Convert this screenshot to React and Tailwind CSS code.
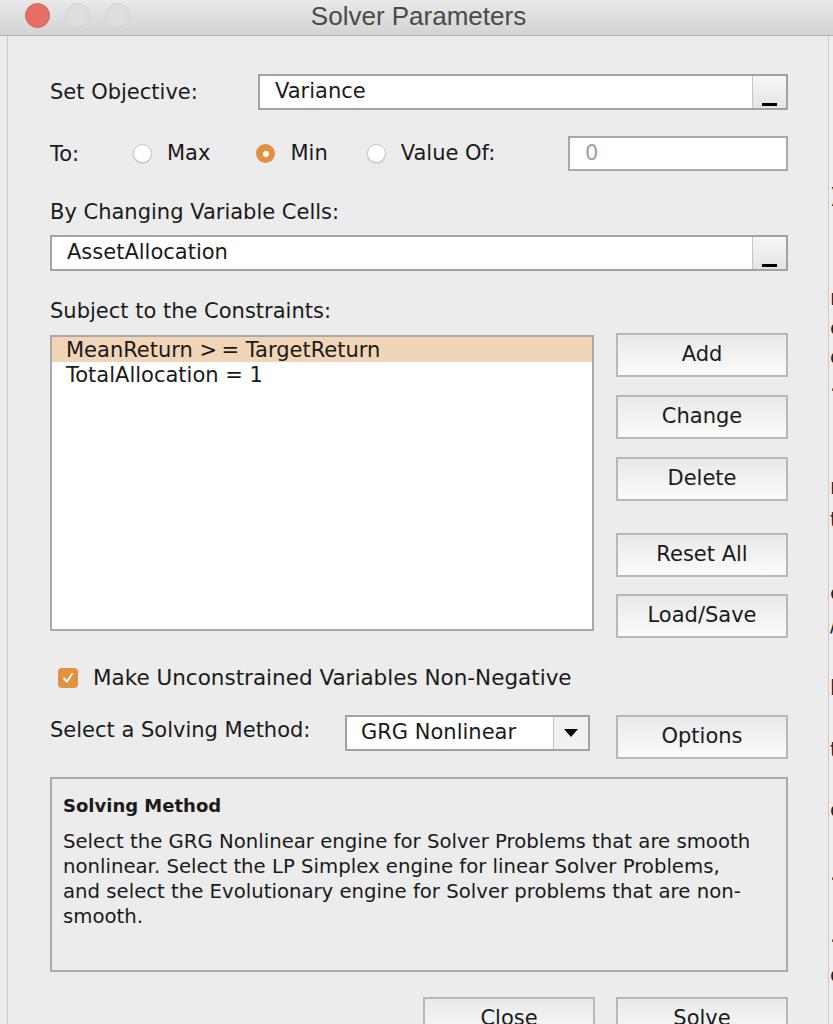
import { useState } from 'react';

// bits of the window behind the dialog, peeking out at the right edge
const FRAGMENTS = [
  { y: 196, ch: ')' }, { y: 298, ch: 'r' }, { y: 328, ch: 'e' }, { y: 357, ch: 'd' },
  { y: 384, ch: '.' }, { y: 487, ch: 'r' }, { y: 520, ch: 't' }, { y: 593, ch: 'e' },
  { y: 625, ch: '/' }, { y: 688, ch: 'h' }, { y: 750, ch: 't' }, { y: 810, ch: 'c' },
  { y: 873, ch: '.' }, { y: 935, ch: '.' }, { y: 975, ch: 'c' },
];

function MacButton({ children, className = '' }) {
  return (
    <button className={`w-[172px] h-[44px] border-2 border-[#b8b8b8] bg-gradient-to-b from-[#e9e9e9] to-[#fbfbfb] text-[21px] text-[#1a1a1a] flex items-center justify-center ${className}`}>
      {children}
    </button>
  );
}

function RefInput({ value, className = '' }) {
  return (
    <div className={`h-[36px] border-2 border-[#a2a2a2] bg-white flex items-stretch ${className}`}>
      <div className="flex-1 flex items-center pl-[15px] text-[21px] text-[#1a1a1a]">{value}</div>
      <div className="w-[34px] border-l border-[#c4c4c4] bg-gradient-to-b from-[#f7f7f7] to-[#e4e4e4] flex items-end justify-center pb-[2px]">
        <div className="w-[15px] h-[3px] bg-black" />
      </div>
    </div>
  );
}

function Radio({ checked, label, onClick }) {
  return (
    <button onClick={onClick} className="flex items-center gap-[15px]">
      {checked ? (
        <span className="w-[19px] h-[19px] rounded-full bg-[#e39140] flex items-center justify-center">
          <span className="w-[6px] h-[6px] rounded-full bg-white" />
        </span>
      ) : (
        <span className="w-[19px] h-[19px] rounded-full bg-white border border-[#c6c6c6] shadow-[0_1px_1px_rgba(0,0,0,0.12)]" />
      )}
      <span className="text-[21px] text-[#1a1a1a]">{label}</span>
    </button>
  );
}

export default function App() {
  const [to, setTo] = useState('min');
  const [nonNeg, setNonNeg] = useState(true);

  return (
    <div className="w-[833px] h-[1024px] overflow-hidden bg-[#ececec] flex flex-col" style={{ fontFamily: '"DejaVu Sans", sans-serif' }}>
      {/* Title bar */}
      <div className="relative h-[36px] shrink-0 bg-gradient-to-b from-[#e9e9e9] to-[#d3d3d3] border-b border-[#b1b1b1] flex items-center justify-center">
        <div className="absolute left-[25px] top-[3px] flex gap-[15px]">
          <span className="w-[25px] h-[25px] rounded-full bg-[#e46f62] border border-[#d66558]" />
          <span className="w-[25px] h-[25px] rounded-full bg-[#dedede] border border-[#d2d2d2]" />
          <span className="w-[25px] h-[25px] rounded-full bg-[#dedede] border border-[#d2d2d2]" />
        </div>
        <span className="text-[26px] text-[#4a4a4a] -mt-[3px] ml-[4px]" style={{ fontFamily: '"Liberation Sans", Arial, sans-serif' }}>Solver Parameters</span>
      </div>

      <div className="flex flex-1 min-h-0">
        <div className="w-[7px] shrink-0" />
        {/* Dialog body */}
        <div className="w-[822px] shrink-0 border-l border-r border-[#c9c9c9] pl-[42px] pr-[40px] text-[#1a1a1a] text-[21px]">
          {/* Set Objective */}
          <div className="mt-[38px] flex items-center">
            <span className="w-[208px] mt-[2px]">Set Objective:</span>
            <RefInput value="Variance" className="flex-1" />
          </div>

          {/* To */}
          <div className="mt-[26px] flex items-center h-[35px]">
            <span className="w-[83px] mt-[2px]">To:</span>
            <Radio checked={to === 'max'} label="Max" onClick={() => setTo('max')} />
            <div className="w-[46px]" />
            <Radio checked={to === 'min'} label="Min" onClick={() => setTo('min')} />
            <div className="w-[39px]" />
            <Radio checked={to === 'value'} label="Value Of:" onClick={() => setTo('value')} />
            <div className="ml-auto w-[220px] h-[35px] border-2 border-[#a9a9a9] bg-white flex items-center pl-[15px] text-[#a0a0a0]">0</div>
          </div>

          {/* Changing cells */}
          <div className="mt-[28px] leading-[26px]">By Changing Variable Cells:</div>
          <RefInput value="AssetAllocation" className="mt-[10px]" />

          {/* Constraints */}
          <div className="mt-[27px] leading-[26px]">Subject to the Constraints:</div>
          <div className="mt-[9px] flex justify-between">
            <div className="w-[544px] h-[296px] mt-[2px] border-2 border-[#a9a9a9] bg-white text-[21px] leading-[26px]">
              <div className="h-[25px] bg-[#f2d4b7] pl-[14px]">MeanReturn &gt;{'\u2009'}= TargetReturn</div>
              <div className="pl-[14px]">TotalAllocation = 1</div>
            </div>
            <div className="flex flex-col">
              <MacButton>Add</MacButton>
              <MacButton className="mt-[18px]">Change</MacButton>
              <MacButton className="mt-[18px]">Delete</MacButton>
              <MacButton className="mt-[32px]">Reset All</MacButton>
              <MacButton className="mt-[17px]">Load/Save</MacButton>
            </div>
          </div>

          {/* Non-negative */}
          <button onClick={() => setNonNeg(!nonNeg)} className="mt-[27px] ml-[8px] flex items-center gap-[15px] h-[26px]">
            <span className={`w-[20px] h-[20px] rounded-[4px] flex items-center justify-center ${nonNeg ? 'bg-[#e2923f]' : 'bg-white border border-[#c6c6c6]'}`}>
              {nonNeg && (
                <svg width="12" height="12" viewBox="0 0 12 12" fill="none">
                  <path d="M2 6.5 L5 9.5 L10 2" stroke="white" strokeWidth="1.8" strokeLinecap="round" strokeLinejoin="round" />
                </svg>
              )}
            </span>
            <span className="text-[21.5px]">Make Unconstrained Variables Non-Negative</span>
          </button>

          {/* Solving method */}
          <div className="mt-[24px] flex items-start">
            <span className="w-[295px] mt-[2px] leading-[26px]">Select a Solving Method:</span>
            <div className="w-[245px] h-[36px] border-2 border-[#a2a2a2] bg-white flex items-stretch">
              <div className="flex-1 flex items-center pl-[14px]">GRG Nonlinear</div>
              <div className="w-[35px] border-l border-[#c4c4c4] bg-[#f1f1f1] flex items-center justify-center">
                <svg width="16" height="10" viewBox="0 0 16 10"><path d="M1 1 H15 L8 9 Z" fill="black" /></svg>
              </div>
            </div>
            <MacButton className="ml-auto">Options</MacButton>
          </div>

          {/* Description */}
          <div className="mt-[18px] h-[195px] border-2 border-[#ababab] pl-[11px] pr-[30px] pt-[14px] text-[19.7px] leading-[25px]">
            <div className="font-bold text-[18px]">Solving Method</div>
            <p className="mt-[11px]">
              Select the GRG Nonlinear engine for Solver Problems that are smooth nonlinear. Select the LP Simplex engine for linear Solver Problems, and select the Evolutionary engine for Solver problems that are non-smooth.
            </p>
          </div>

          {/* Footer */}
          <div className="mt-[25px] flex justify-end gap-[21px]">
            <MacButton>Close</MacButton>
            <MacButton>Solve</MacButton>
          </div>
        </div>

        {/* Window behind */}
        <div className="relative flex-1 bg-[#efefef] overflow-hidden text-[21px] leading-[24px] text-[#222]">
          {FRAGMENTS.map((f, i) => (
            <span key={i} className="absolute left-[1px]" style={{ top: f.y - 36 - 12 }}>{f.ch}</span>
          ))}
        </div>
      </div>
    </div>
  );
}
